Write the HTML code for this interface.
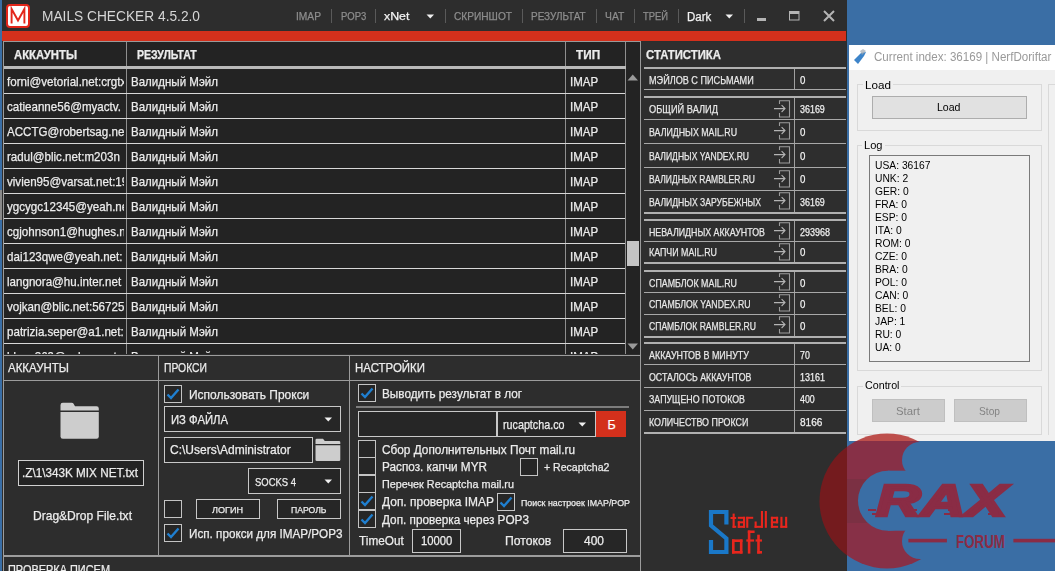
<!DOCTYPE html>
<html><head><meta charset="utf-8"><style>
html,body{margin:0;padding:0;}
body{width:1055px;height:571px;position:relative;overflow:hidden;background:#3a6ea5;font-family:"Liberation Sans",sans-serif;}
.a{position:absolute;}
.t{position:absolute;white-space:nowrap;transform-origin:0 0;-webkit-text-stroke:0.25px currentColor;}
</style></head><body>
<div class="a" style="left:2px;top:0px;width:845px;height:571px;background:#2d2d2d;"></div>
<div class="a" style="left:0px;top:0px;width:2px;height:190px;background:#3a6ea5;"></div>
<div class="a" style="left:0px;top:190px;width:2px;height:30px;background:#8a8a8a;"></div>
<div class="a" style="left:0px;top:453px;width:2px;height:118px;background:#3a6ea5;"></div>
<svg class="a" style="left:6px;top:4px" width="24" height="24" viewBox="0 0 24 24"><rect x="1" y="1" width="22" height="22" rx="3" fill="#ffffff" stroke="#e3261a" stroke-width="2"/><path d="M5.6 19.5 V5 L12 16.5 L18.4 5 V19.5" fill="none" stroke="#e3261a" stroke-width="1.9"/></svg>
<span class="t" id="t0" style="transform:scaleX(0.9281);left:41.6px;top:9.27px;font-size:14.8px;line-height:14.8px;color:#d6d6d6;font-weight:400;font-family:'Liberation Sans';-webkit-text-stroke:0">MAILS CHECKER 4.5.2.0</span>
<span class="t" id="t1" style="transform:scaleX(0.9738);left:296.3px;top:11.41px;font-size:10.5px;line-height:10.5px;color:#8d8d8d;font-weight:400;font-family:'Liberation Sans';">IMAP</span>
<span class="t" id="t2" style="transform:scaleX(0.9031);left:340.6px;top:11.41px;font-size:10.5px;line-height:10.5px;color:#8d8d8d;font-weight:400;font-family:'Liberation Sans';">POP3</span>
<span class="t" id="t3" style="transform:scaleX(1.1036);left:383.6px;top:11.42px;font-size:11.2px;line-height:11.2px;color:#f2f2f2;font-weight:400;font-family:'Liberation Sans';">xNet</span>
<span class="t" id="t4" style="transform:scaleX(0.9659);left:454.1px;top:11.41px;font-size:10.5px;line-height:10.5px;color:#8d8d8d;font-weight:400;font-family:'Liberation Sans';">СКРИНШОТ</span>
<span class="t" id="t5" style="transform:scaleX(0.9460);left:531.4px;top:11.41px;font-size:10.5px;line-height:10.5px;color:#8d8d8d;font-weight:400;font-family:'Liberation Sans';">РЕЗУЛЬТАТ</span>
<span class="t" id="t6" style="transform:scaleX(0.9842);left:605.0px;top:11.41px;font-size:10.5px;line-height:10.5px;color:#8d8d8d;font-weight:400;font-family:'Liberation Sans';">ЧАТ</span>
<span class="t" id="t7" style="transform:scaleX(0.8939);left:643.4px;top:11.41px;font-size:10.5px;line-height:10.5px;color:#8d8d8d;font-weight:400;font-family:'Liberation Sans';">ТРЕЙ</span>
<span class="t" id="t8" style="transform:scaleX(0.9549);left:686.6px;top:10.84px;font-size:12px;line-height:12px;color:#f2f2f2;font-weight:400;font-family:'Liberation Sans';">Dark</span>
<div class="a" style="left:331px;top:9px;width:1px;height:14px;background:#5a5a5a;"></div>
<div class="a" style="left:375px;top:9px;width:1px;height:14px;background:#5a5a5a;"></div>
<div class="a" style="left:445px;top:9px;width:1px;height:14px;background:#5a5a5a;"></div>
<div class="a" style="left:522px;top:9px;width:1px;height:14px;background:#5a5a5a;"></div>
<div class="a" style="left:596px;top:9px;width:1px;height:14px;background:#5a5a5a;"></div>
<div class="a" style="left:634px;top:9px;width:1px;height:14px;background:#5a5a5a;"></div>
<div class="a" style="left:678px;top:9px;width:1px;height:14px;background:#5a5a5a;"></div>
<div class="a" style="left:744px;top:9px;width:1px;height:14px;background:#5a5a5a;"></div>
<svg class="a" style="left:426px;top:14px" width="9" height="5"><path d="M0.5 0.5 H8 L4.25 4.5 Z" fill="#f0f0f0"/></svg>
<svg class="a" style="left:725px;top:14px" width="9" height="5"><path d="M0.5 0.5 H8 L4.25 4.5 Z" fill="#f0f0f0"/></svg>
<div class="a" style="left:757px;top:18px;width:9px;height:3px;background:#b4b4b4;"></div>
<svg class="a" style="left:789px;top:11px" width="11" height="10"><rect x="0.5" y="0.5" width="9.5" height="8.5" fill="none" stroke="#b4b4b4" stroke-width="1"/><rect x="0.5" y="0.5" width="9.5" height="2.5" fill="#b4b4b4"/></svg>
<svg class="a" style="left:823px;top:10px" width="12" height="12"><path d="M1 1 L11 11 M11 1 L1 11" stroke="#b4b4b4" stroke-width="2"/></svg>
<div class="a" style="left:2px;top:31px;width:844px;height:10px;background:#d3301c;"></div>
<div class="a" style="left:3px;top:41px;width:638px;height:313px;background:#232323;"></div>
<div class="a" style="left:3px;top:41px;width:638px;height:1px;background:#9a9a9a;"></div>
<div class="a" style="left:3px;top:41px;width:1px;height:530px;background:#9a9a9a;"></div>
<div class="a" style="left:126px;top:42px;width:1px;height:312px;background:#8e8e8e;"></div>
<div class="a" style="left:565px;top:42px;width:1px;height:312px;background:#8e8e8e;"></div>
<div class="a" style="left:625px;top:42px;width:1px;height:312px;background:#8e8e8e;"></div>
<div class="a" style="left:640px;top:41px;width:1px;height:530px;background:#9a9a9a;"></div>
<div class="a" style="left:4px;top:66px;width:622px;height:3px;background:#b9b9b9;"></div>
<span class="t" id="t9" style="transform:scaleX(0.9440);left:14.0px;top:48.84px;font-size:12px;line-height:12px;color:#ececec;font-weight:700;font-family:'Liberation Sans';">АККАУНТЫ</span>
<span class="t" id="t10" style="transform:scaleX(0.8794);left:137.3px;top:48.84px;font-size:12px;line-height:12px;color:#ececec;font-weight:700;font-family:'Liberation Sans';">РЕЗУЛЬТАТ</span>
<span class="t" id="t11" style="transform:scaleX(0.9799);left:576.2px;top:48.84px;font-size:12px;line-height:12px;color:#ececec;font-weight:700;font-family:'Liberation Sans';">ТИП</span>
<div class="a" style="left:4px;top:93px;width:621px;height:1px;background:#d8d8d8;"></div>
<div class="a" style="left:4px;top:118px;width:621px;height:1px;background:#d8d8d8;"></div>
<div class="a" style="left:4px;top:143px;width:621px;height:1px;background:#d8d8d8;"></div>
<div class="a" style="left:4px;top:168px;width:621px;height:1px;background:#d8d8d8;"></div>
<div class="a" style="left:4px;top:193px;width:621px;height:1px;background:#d8d8d8;"></div>
<div class="a" style="left:4px;top:218px;width:621px;height:1px;background:#d8d8d8;"></div>
<div class="a" style="left:4px;top:243px;width:621px;height:1px;background:#d8d8d8;"></div>
<div class="a" style="left:4px;top:268px;width:621px;height:1px;background:#d8d8d8;"></div>
<div class="a" style="left:4px;top:293px;width:621px;height:1px;background:#d8d8d8;"></div>
<div class="a" style="left:4px;top:318px;width:621px;height:1px;background:#d8d8d8;"></div>
<div class="a" style="left:4px;top:343px;width:621px;height:1px;background:#d8d8d8;"></div>
<div class="a" style="left:4px;top:69px;width:120px;height:285px;overflow:hidden">
<span class="t" style="left:3px;top:7.10px;font-size:12.4px;line-height:12.4px;color:#ececec;transform:scaleX(0.935)">forni@vetorial.net:crgtx</span>
<span class="t" style="left:3px;top:32.10px;font-size:12.4px;line-height:12.4px;color:#ececec;transform:scaleX(0.935)">catieanne56@myactv.</span>
<span class="t" style="left:3px;top:57.10px;font-size:12.4px;line-height:12.4px;color:#ececec;transform:scaleX(0.935)">ACCTG@robertsag.net:x</span>
<span class="t" style="left:3px;top:82.10px;font-size:12.4px;line-height:12.4px;color:#ececec;transform:scaleX(0.935)">radul@blic.net:m203n</span>
<span class="t" style="left:3px;top:107.10px;font-size:12.4px;line-height:12.4px;color:#ececec;transform:scaleX(0.935)">vivien95@varsat.net:19</span>
<span class="t" style="left:3px;top:132.10px;font-size:12.4px;line-height:12.4px;color:#ececec;transform:scaleX(0.935)">ygcygc12345@yeah.ne</span>
<span class="t" style="left:3px;top:157.10px;font-size:12.4px;line-height:12.4px;color:#ececec;transform:scaleX(0.935)">cgjohnson1@hughes.n</span>
<span class="t" style="left:3px;top:182.10px;font-size:12.4px;line-height:12.4px;color:#ececec;transform:scaleX(0.935)">dai123qwe@yeah.net:</span>
<span class="t" style="left:3px;top:207.10px;font-size:12.4px;line-height:12.4px;color:#ececec;transform:scaleX(0.935)">langnora@hu.inter.net</span>
<span class="t" style="left:3px;top:232.10px;font-size:12.4px;line-height:12.4px;color:#ececec;transform:scaleX(0.935)">vojkan@blic.net:56725</span>
<span class="t" style="left:3px;top:257.10px;font-size:12.4px;line-height:12.4px;color:#ececec;transform:scaleX(0.935)">patrizia.seper@a1.net:</span>
<span class="t" style="left:3px;top:282.10px;font-size:12.4px;line-height:12.4px;color:#ececec;transform:scaleX(0.935)">ldsop369@yahoo.net:</span>
</div>
<div class="a" style="left:127px;top:69px;width:498px;height:285px;overflow:hidden">
<span class="t" style="left:3.6px;top:7.10px;font-size:12.4px;line-height:12.4px;color:#ececec;transform:scaleX(0.93)">Валидный Мэйл</span>
<span class="t" style="left:442.5px;top:7.10px;font-size:12.4px;line-height:12.4px;color:#ececec;transform:scaleX(0.93)">IMAP</span>
<span class="t" style="left:3.6px;top:32.10px;font-size:12.4px;line-height:12.4px;color:#ececec;transform:scaleX(0.93)">Валидный Мэйл</span>
<span class="t" style="left:442.5px;top:32.10px;font-size:12.4px;line-height:12.4px;color:#ececec;transform:scaleX(0.93)">IMAP</span>
<span class="t" style="left:3.6px;top:57.10px;font-size:12.4px;line-height:12.4px;color:#ececec;transform:scaleX(0.93)">Валидный Мэйл</span>
<span class="t" style="left:442.5px;top:57.10px;font-size:12.4px;line-height:12.4px;color:#ececec;transform:scaleX(0.93)">IMAP</span>
<span class="t" style="left:3.6px;top:82.10px;font-size:12.4px;line-height:12.4px;color:#ececec;transform:scaleX(0.93)">Валидный Мэйл</span>
<span class="t" style="left:442.5px;top:82.10px;font-size:12.4px;line-height:12.4px;color:#ececec;transform:scaleX(0.93)">IMAP</span>
<span class="t" style="left:3.6px;top:107.10px;font-size:12.4px;line-height:12.4px;color:#ececec;transform:scaleX(0.93)">Валидный Мэйл</span>
<span class="t" style="left:442.5px;top:107.10px;font-size:12.4px;line-height:12.4px;color:#ececec;transform:scaleX(0.93)">IMAP</span>
<span class="t" style="left:3.6px;top:132.10px;font-size:12.4px;line-height:12.4px;color:#ececec;transform:scaleX(0.93)">Валидный Мэйл</span>
<span class="t" style="left:442.5px;top:132.10px;font-size:12.4px;line-height:12.4px;color:#ececec;transform:scaleX(0.93)">IMAP</span>
<span class="t" style="left:3.6px;top:157.10px;font-size:12.4px;line-height:12.4px;color:#ececec;transform:scaleX(0.93)">Валидный Мэйл</span>
<span class="t" style="left:442.5px;top:157.10px;font-size:12.4px;line-height:12.4px;color:#ececec;transform:scaleX(0.93)">IMAP</span>
<span class="t" style="left:3.6px;top:182.10px;font-size:12.4px;line-height:12.4px;color:#ececec;transform:scaleX(0.93)">Валидный Мэйл</span>
<span class="t" style="left:442.5px;top:182.10px;font-size:12.4px;line-height:12.4px;color:#ececec;transform:scaleX(0.93)">IMAP</span>
<span class="t" style="left:3.6px;top:207.10px;font-size:12.4px;line-height:12.4px;color:#ececec;transform:scaleX(0.93)">Валидный Мэйл</span>
<span class="t" style="left:442.5px;top:207.10px;font-size:12.4px;line-height:12.4px;color:#ececec;transform:scaleX(0.93)">IMAP</span>
<span class="t" style="left:3.6px;top:232.10px;font-size:12.4px;line-height:12.4px;color:#ececec;transform:scaleX(0.93)">Валидный Мэйл</span>
<span class="t" style="left:442.5px;top:232.10px;font-size:12.4px;line-height:12.4px;color:#ececec;transform:scaleX(0.93)">IMAP</span>
<span class="t" style="left:3.6px;top:257.10px;font-size:12.4px;line-height:12.4px;color:#ececec;transform:scaleX(0.93)">Валидный Мэйл</span>
<span class="t" style="left:442.5px;top:257.10px;font-size:12.4px;line-height:12.4px;color:#ececec;transform:scaleX(0.93)">IMAP</span>
<span class="t" style="left:3.6px;top:282.10px;font-size:12.4px;line-height:12.4px;color:#ececec;transform:scaleX(0.93)">Валидный Мэйл</span>
<span class="t" style="left:442.5px;top:282.10px;font-size:12.4px;line-height:12.4px;color:#ececec;transform:scaleX(0.93)">IMAP</span>
</div>
<svg class="a" style="left:627px;top:74px" width="12" height="7"><path d="M0.5 6.5 L5.75 0.5 L11 6.5 Z" fill="#9a9a9a"/></svg>
<div class="a" style="left:627px;top:241px;width:12px;height:25px;background:#c4c4c4;"></div>
<svg class="a" style="left:627px;top:343px" width="12" height="7"><path d="M0.5 0.5 L5.75 6.5 L11 0.5 Z" fill="#9a9a9a"/></svg>
<div class="a" style="left:641px;top:42px;width:205px;height:529px;background:#2e2e2e;"></div>
<div class="a" style="left:640px;top:41px;width:1px;height:530px;background:#9a9a9a;"></div>
<span class="t" id="t12" style="transform:scaleX(0.9081);left:645.6px;top:48.82px;font-size:12.5px;line-height:12.5px;color:#ececec;font-weight:700;font-family:'Liberation Sans';">СТАТИСТИКА</span>
<div class="a" style="left:644px;top:67px;width:202px;height:2px;background:#b0b0b0;"></div>
<span class="t" id="t13" style="transform:scaleX(0.8280);left:648.6px;top:74.99px;font-size:11px;line-height:11px;color:#e8e8e8;font-weight:400;font-family:'Liberation Sans';">МЭЙЛОВ С ПИСЬМАМИ</span>
<span class="t" id="t14" style="transform:scaleX(0.8816);left:799.8px;top:74.99px;font-size:11px;line-height:11px;color:#f0f0f0;font-weight:400;font-family:'Liberation Sans';">0</span>
<div class="a" style="left:794px;top:69px;width:1px;height:20px;background:#a0a0a0;"></div>
<span class="t" id="t15" style="transform:scaleX(0.8405);left:648.6px;top:104.29px;font-size:11px;line-height:11px;color:#e8e8e8;font-weight:400;font-family:'Liberation Sans';">ОБЩИЙ ВАЛИД</span>
<span class="t" id="t16" style="transform:scaleX(0.8106);left:799.8px;top:104.29px;font-size:11px;line-height:11px;color:#f0f0f0;font-weight:400;font-family:'Liberation Sans';">36169</span>
<div class="a" style="left:794px;top:98px;width:1px;height:21px;background:#a0a0a0;"></div>
<svg class="a" style="left:773px;top:100px" width="18" height="18" viewBox="0 0 18 18"><path d="M6.5 4 V0.8 H16.5 V17 H6.5 V13" fill="none" stroke="#9c9c9c" stroke-width="1.1"/><path d="M1 8.6 H12 M8.6 5.2 L12 8.6 L8.6 12" fill="none" stroke="#b4b4b4" stroke-width="1.1"/></svg>
<span class="t" id="t17" style="transform:scaleX(0.8013);left:648.6px;top:127.09px;font-size:11px;line-height:11px;color:#e8e8e8;font-weight:400;font-family:'Liberation Sans';">ВАЛИДНЫХ MAIL.RU</span>
<span class="t" id="t18" style="transform:scaleX(0.8816);left:799.8px;top:127.09px;font-size:11px;line-height:11px;color:#f0f0f0;font-weight:400;font-family:'Liberation Sans';">0</span>
<div class="a" style="left:794px;top:120px;width:1px;height:23px;background:#a0a0a0;"></div>
<svg class="a" style="left:773px;top:122px" width="18" height="18" viewBox="0 0 18 18"><path d="M6.5 4 V0.8 H16.5 V17 H6.5 V13" fill="none" stroke="#9c9c9c" stroke-width="1.1"/><path d="M1 8.6 H12 M8.6 5.2 L12 8.6 L8.6 12" fill="none" stroke="#b4b4b4" stroke-width="1.1"/></svg>
<span class="t" id="t19" style="transform:scaleX(0.7778);left:648.6px;top:150.69px;font-size:11px;line-height:11px;color:#e8e8e8;font-weight:400;font-family:'Liberation Sans';">ВАЛИДНЫХ YANDEX.RU</span>
<span class="t" id="t20" style="transform:scaleX(0.8816);left:799.8px;top:150.69px;font-size:11px;line-height:11px;color:#f0f0f0;font-weight:400;font-family:'Liberation Sans';">0</span>
<div class="a" style="left:794px;top:144px;width:1px;height:23px;background:#a0a0a0;"></div>
<svg class="a" style="left:773px;top:146px" width="18" height="18" viewBox="0 0 18 18"><path d="M6.5 4 V0.8 H16.5 V17 H6.5 V13" fill="none" stroke="#9c9c9c" stroke-width="1.1"/><path d="M1 8.6 H12 M8.6 5.2 L12 8.6 L8.6 12" fill="none" stroke="#b4b4b4" stroke-width="1.1"/></svg>
<span class="t" id="t21" style="transform:scaleX(0.7719);left:648.6px;top:174.49px;font-size:11px;line-height:11px;color:#e8e8e8;font-weight:400;font-family:'Liberation Sans';">ВАЛИДНЫХ RAMBLER.RU</span>
<span class="t" id="t22" style="transform:scaleX(0.8816);left:799.8px;top:174.49px;font-size:11px;line-height:11px;color:#f0f0f0;font-weight:400;font-family:'Liberation Sans';">0</span>
<div class="a" style="left:794px;top:168px;width:1px;height:22px;background:#a0a0a0;"></div>
<svg class="a" style="left:773px;top:170px" width="18" height="18" viewBox="0 0 18 18"><path d="M6.5 4 V0.8 H16.5 V17 H6.5 V13" fill="none" stroke="#9c9c9c" stroke-width="1.1"/><path d="M1 8.6 H12 M8.6 5.2 L12 8.6 L8.6 12" fill="none" stroke="#b4b4b4" stroke-width="1.1"/></svg>
<span class="t" id="t23" style="transform:scaleX(0.7832);left:648.6px;top:197.49px;font-size:11px;line-height:11px;color:#e8e8e8;font-weight:400;font-family:'Liberation Sans';">ВАЛИДНЫХ ЗАРУБЕЖНЫХ</span>
<span class="t" id="t24" style="transform:scaleX(0.8106);left:799.8px;top:197.49px;font-size:11px;line-height:11px;color:#f0f0f0;font-weight:400;font-family:'Liberation Sans';">36169</span>
<div class="a" style="left:794px;top:191px;width:1px;height:21px;background:#a0a0a0;"></div>
<svg class="a" style="left:773px;top:192px" width="18" height="18" viewBox="0 0 18 18"><path d="M6.5 4 V0.8 H16.5 V17 H6.5 V13" fill="none" stroke="#9c9c9c" stroke-width="1.1"/><path d="M1 8.6 H12 M8.6 5.2 L12 8.6 L8.6 12" fill="none" stroke="#b4b4b4" stroke-width="1.1"/></svg>
<span class="t" id="t25" style="transform:scaleX(0.8025);left:648.6px;top:226.99px;font-size:11px;line-height:11px;color:#e8e8e8;font-weight:400;font-family:'Liberation Sans';">НЕВАЛИДНЫХ АККАУНТОВ</span>
<span class="t" id="t26" style="transform:scaleX(0.8170);left:799.8px;top:226.99px;font-size:11px;line-height:11px;color:#f0f0f0;font-weight:400;font-family:'Liberation Sans';">293968</span>
<div class="a" style="left:794px;top:221px;width:1px;height:20px;background:#a0a0a0;"></div>
<svg class="a" style="left:773px;top:222px" width="18" height="18" viewBox="0 0 18 18"><path d="M6.5 4 V0.8 H16.5 V17 H6.5 V13" fill="none" stroke="#9c9c9c" stroke-width="1.1"/><path d="M1 8.6 H12 M8.6 5.2 L12 8.6 L8.6 12" fill="none" stroke="#b4b4b4" stroke-width="1.1"/></svg>
<span class="t" id="t27" style="transform:scaleX(0.8052);left:648.6px;top:247.09px;font-size:11px;line-height:11px;color:#e8e8e8;font-weight:400;font-family:'Liberation Sans';">КАПЧИ MAIL.RU</span>
<span class="t" id="t28" style="transform:scaleX(0.8816);left:799.8px;top:247.09px;font-size:11px;line-height:11px;color:#f0f0f0;font-weight:400;font-family:'Liberation Sans';">0</span>
<div class="a" style="left:794px;top:242px;width:1px;height:20px;background:#a0a0a0;"></div>
<svg class="a" style="left:773px;top:243px" width="18" height="18" viewBox="0 0 18 18"><path d="M6.5 4 V0.8 H16.5 V17 H6.5 V13" fill="none" stroke="#9c9c9c" stroke-width="1.1"/><path d="M1 8.6 H12 M8.6 5.2 L12 8.6 L8.6 12" fill="none" stroke="#b4b4b4" stroke-width="1.1"/></svg>
<span class="t" id="t29" style="transform:scaleX(0.8041);left:648.6px;top:278.09px;font-size:11px;line-height:11px;color:#e8e8e8;font-weight:400;font-family:'Liberation Sans';">СПАМБЛОК MAIL.RU</span>
<span class="t" id="t30" style="transform:scaleX(0.8816);left:799.8px;top:278.09px;font-size:11px;line-height:11px;color:#f0f0f0;font-weight:400;font-family:'Liberation Sans';">0</span>
<div class="a" style="left:794px;top:272px;width:1px;height:20px;background:#a0a0a0;"></div>
<svg class="a" style="left:773px;top:273px" width="18" height="18" viewBox="0 0 18 18"><path d="M6.5 4 V0.8 H16.5 V17 H6.5 V13" fill="none" stroke="#9c9c9c" stroke-width="1.1"/><path d="M1 8.6 H12 M8.6 5.2 L12 8.6 L8.6 12" fill="none" stroke="#b4b4b4" stroke-width="1.1"/></svg>
<span class="t" id="t31" style="transform:scaleX(0.7927);left:648.6px;top:299.19px;font-size:11px;line-height:11px;color:#e8e8e8;font-weight:400;font-family:'Liberation Sans';">СПАМБЛОК YANDEX.RU</span>
<span class="t" id="t32" style="transform:scaleX(0.8816);left:799.8px;top:299.19px;font-size:11px;line-height:11px;color:#f0f0f0;font-weight:400;font-family:'Liberation Sans';">0</span>
<div class="a" style="left:794px;top:293px;width:1px;height:21px;background:#a0a0a0;"></div>
<svg class="a" style="left:773px;top:294px" width="18" height="18" viewBox="0 0 18 18"><path d="M6.5 4 V0.8 H16.5 V17 H6.5 V13" fill="none" stroke="#9c9c9c" stroke-width="1.1"/><path d="M1 8.6 H12 M8.6 5.2 L12 8.6 L8.6 12" fill="none" stroke="#b4b4b4" stroke-width="1.1"/></svg>
<span class="t" id="t33" style="transform:scaleX(0.7814);left:648.6px;top:321.29px;font-size:11px;line-height:11px;color:#e8e8e8;font-weight:400;font-family:'Liberation Sans';">СПАМБЛОК RAMBLER.RU</span>
<span class="t" id="t34" style="transform:scaleX(0.8816);left:799.8px;top:321.29px;font-size:11px;line-height:11px;color:#f0f0f0;font-weight:400;font-family:'Liberation Sans';">0</span>
<div class="a" style="left:794px;top:315px;width:1px;height:21px;background:#a0a0a0;"></div>
<svg class="a" style="left:773px;top:316px" width="18" height="18" viewBox="0 0 18 18"><path d="M6.5 4 V0.8 H16.5 V17 H6.5 V13" fill="none" stroke="#9c9c9c" stroke-width="1.1"/><path d="M1 8.6 H12 M8.6 5.2 L12 8.6 L8.6 12" fill="none" stroke="#b4b4b4" stroke-width="1.1"/></svg>
<span class="t" id="t35" style="transform:scaleX(0.8116);left:648.6px;top:349.69px;font-size:11px;line-height:11px;color:#e8e8e8;font-weight:400;font-family:'Liberation Sans';">АККАУНТОВ В МИНУТУ</span>
<span class="t" id="t36" style="transform:scaleX(0.8000);left:799.8px;top:349.69px;font-size:11px;line-height:11px;color:#f0f0f0;font-weight:400;font-family:'Liberation Sans';">70</span>
<div class="a" style="left:794px;top:344px;width:1px;height:20px;background:#a0a0a0;"></div>
<span class="t" id="t37" style="transform:scaleX(0.8000);left:648.6px;top:371.79px;font-size:11px;line-height:11px;color:#e8e8e8;font-weight:400;font-family:'Liberation Sans';">ОСТАЛОСЬ АККАУНТОВ</span>
<span class="t" id="t38" style="transform:scaleX(0.8172);left:799.8px;top:371.79px;font-size:11px;line-height:11px;color:#f0f0f0;font-weight:400;font-family:'Liberation Sans';">13161</span>
<div class="a" style="left:794px;top:365px;width:1px;height:22px;background:#a0a0a0;"></div>
<span class="t" id="t39" style="transform:scaleX(0.8041);left:648.6px;top:394.19px;font-size:11px;line-height:11px;color:#e8e8e8;font-weight:400;font-family:'Liberation Sans';">ЗАПУЩЕНО ПОТОКОВ</span>
<span class="t" id="t40" style="transform:scaleX(0.8007);left:799.8px;top:394.19px;font-size:11px;line-height:11px;color:#f0f0f0;font-weight:400;font-family:'Liberation Sans';">400</span>
<div class="a" style="left:794px;top:388px;width:1px;height:22px;background:#a0a0a0;"></div>
<span class="t" id="t41" style="transform:scaleX(0.8075);left:648.6px;top:417.49px;font-size:11px;line-height:11px;color:#e8e8e8;font-weight:400;font-family:'Liberation Sans';">КОЛИЧЕСТВО ПРОКСИ</span>
<span class="t" id="t42" style="transform:scaleX(0.9149);left:799.8px;top:417.49px;font-size:11px;line-height:11px;color:#f0f0f0;font-weight:400;font-family:'Liberation Sans';">8166</span>
<div class="a" style="left:794px;top:411px;width:1px;height:21px;background:#a0a0a0;"></div>
<div class="a" style="left:644px;top:89px;width:202px;height:1px;background:#a8a8a8;"></div>
<div class="a" style="left:644px;top:119px;width:202px;height:1px;background:#a8a8a8;"></div>
<div class="a" style="left:644px;top:143px;width:202px;height:1px;background:#a8a8a8;"></div>
<div class="a" style="left:644px;top:167px;width:202px;height:1px;background:#a8a8a8;"></div>
<div class="a" style="left:644px;top:190px;width:202px;height:1px;background:#a8a8a8;"></div>
<div class="a" style="left:644px;top:241px;width:202px;height:1px;background:#a8a8a8;"></div>
<div class="a" style="left:644px;top:292px;width:202px;height:1px;background:#a8a8a8;"></div>
<div class="a" style="left:644px;top:314px;width:202px;height:1px;background:#a8a8a8;"></div>
<div class="a" style="left:644px;top:364px;width:202px;height:1px;background:#a8a8a8;"></div>
<div class="a" style="left:644px;top:387px;width:202px;height:1px;background:#a8a8a8;"></div>
<div class="a" style="left:644px;top:410px;width:202px;height:1px;background:#a8a8a8;"></div>
<div class="a" style="left:644px;top:96px;width:202px;height:2px;background:#b0b0b0;"></div>
<div class="a" style="left:644px;top:212px;width:202px;height:2px;background:#b0b0b0;"></div>
<div class="a" style="left:644px;top:219px;width:202px;height:2px;background:#b0b0b0;"></div>
<div class="a" style="left:644px;top:262px;width:202px;height:2px;background:#b0b0b0;"></div>
<div class="a" style="left:644px;top:270px;width:202px;height:2px;background:#b0b0b0;"></div>
<div class="a" style="left:644px;top:336px;width:202px;height:2px;background:#b0b0b0;"></div>
<div class="a" style="left:644px;top:342px;width:202px;height:2px;background:#b0b0b0;"></div>
<div class="a" style="left:644px;top:432px;width:202px;height:2px;background:#b0b0b0;"></div>
<div class="a" style="left:3px;top:355px;width:638px;height:216px;background:#2d2d2d;"></div>
<div class="a" style="left:3px;top:355px;width:638px;height:1px;background:#9c9c9c;"></div>
<div class="a" style="left:3px;top:355px;width:1px;height:216px;background:#9c9c9c;"></div>
<div class="a" style="left:640px;top:355px;width:1px;height:216px;background:#9c9c9c;"></div>
<div class="a" style="left:4px;top:380px;width:636px;height:1px;background:#9c9c9c;"></div>
<div class="a" style="left:158px;top:356px;width:1px;height:199px;background:#9c9c9c;"></div>
<div class="a" style="left:349px;top:356px;width:1px;height:199px;background:#9c9c9c;"></div>
<div class="a" style="left:4px;top:555px;width:636px;height:2px;background:#9c9c9c;"></div>
<span class="t" id="t43" style="transform:scaleX(0.9192);left:8.0px;top:362.42px;font-size:12.5px;line-height:12.5px;color:#ececec;font-weight:400;font-family:'Liberation Sans';">АККАУНТЫ</span>
<span class="t" id="t44" style="transform:scaleX(0.8279);left:163.5px;top:362.42px;font-size:12.5px;line-height:12.5px;color:#ececec;font-weight:400;font-family:'Liberation Sans';">ПРОКСИ</span>
<span class="t" id="t45" style="transform:scaleX(0.9165);left:354.6px;top:362.22px;font-size:12.5px;line-height:12.5px;color:#ececec;font-weight:400;font-family:'Liberation Sans';">НАСТРОЙКИ</span>
<span class="t" id="t46" style="transform:scaleX(0.8746);left:8.0px;top:563.92px;font-size:12.5px;line-height:12.5px;color:#ececec;font-weight:400;font-family:'Liberation Sans';">ПРОВЕРКА ПИСЕМ</span>
<svg class="a" style="left:60px;top:402px" width="40" height="38" viewBox="0 0 40 38"><path d="M0.5 8.5 V3 Q0.5 0.7 2.8 0.7 H11.8 Q12.8 0.7 13.4 1.5 L15 4.2 H36.5 Q38.8 4.2 38.8 6.5 V8.5 Z" fill="#cdcdcd"/><path d="M0.5 10 H38.8 V34.5 Q38.8 36.8 36.5 36.8 H2.8 Q0.5 36.8 0.5 34.5 Z" fill="#cdcdcd"/></svg>
<div class="a" style="left:18px;top:460px;width:124px;height:24px;border:1px solid #d0d0d0;background:#232323;"></div>
<span class="t" id="t47" style="transform:scaleX(0.9463);left:22.0px;top:466.50px;font-size:12.4px;line-height:12.4px;color:#ececec;font-weight:400;font-family:'Liberation Sans';">.Z\1\343K MIX NET.txt</span>
<span class="t" id="t48" style="transform:scaleX(0.9713);left:32.7px;top:509.50px;font-size:12.4px;line-height:12.4px;color:#ececec;font-weight:400;font-family:'Liberation Sans';">Drag&amp;Drop File.txt</span>
<div class="a" style="left:164px;top:385px;width:16px;height:16px;border:1px solid #c4c4c4;background:#262626;"></div>
<svg class="a" style="left:164px;top:385px" width="18" height="18" viewBox="0 0 18 18"><path d="M3.5 9.5 L7 13 L14.5 4.5" fill="none" stroke="#1f7fd0" stroke-width="2.4" stroke-linejoin="miter"/></svg>
<span class="t" id="t49" style="transform:scaleX(0.9574);left:188.7px;top:388.92px;font-size:12.5px;line-height:12.5px;color:#ececec;font-weight:400;font-family:'Liberation Sans';">Использовать Прокси</span>
<div class="a" style="left:164px;top:406px;width:175px;height:24px;border:1px solid #c8c8c8;background:#262626;"></div>
<span class="t" id="t50" style="transform:scaleX(0.9032);left:171.1px;top:413.62px;font-size:12.5px;line-height:12.5px;color:#ececec;font-weight:400;font-family:'Liberation Sans';">ИЗ ФАЙЛА</span>
<svg class="a" style="left:324px;top:417px" width="9" height="5"><path d="M0.5 0.5 H8 L4.25 4.5 Z" fill="#f0f0f0"/></svg>
<div class="a" style="left:164px;top:437px;width:147px;height:24px;border:1px solid #c8c8c8;background:#262626;"></div>
<span class="t" id="t51" style="transform:scaleX(0.9847);left:169.8px;top:443.67px;font-size:12.2px;line-height:12.2px;color:#ececec;font-weight:400;font-family:'Liberation Sans';">C:\Users\Administrator</span>
<svg class="a" style="left:315px;top:438px" width="26" height="24" viewBox="0 0 26 24"><path d="M0.5 6 V2 Q0.5 0.7 1.8 0.7 H8 L9.8 3 H24 Q25.3 3 25.3 4.3 V6 Z" fill="#cdcdcd"/><path d="M0.5 7.2 H25.3 V21.8 Q25.3 23 24 23 H1.8 Q0.5 23 0.5 21.8 Z" fill="#cdcdcd"/></svg>
<div class="a" style="left:248px;top:468px;width:91px;height:24px;border:1px solid #c8c8c8;background:#262626;"></div>
<span class="t" id="t52" style="transform:scaleX(0.8598);left:254.8px;top:476.69px;font-size:11px;line-height:11px;color:#ececec;font-weight:400;font-family:'Liberation Sans';">SOCKS 4</span>
<svg class="a" style="left:324px;top:479px" width="9" height="5"><path d="M0.5 0.5 H8 L4.25 4.5 Z" fill="#f0f0f0"/></svg>
<div class="a" style="left:164px;top:500px;width:16px;height:16px;border:1px solid #c4c4c4;background:#262626;"></div>
<div class="a" style="left:196px;top:499px;width:62px;height:18px;border:1px solid #c8c8c8;background:#262626;"></div>
<span class="t" id="t53" style="transform:scaleX(0.9258);left:211.5px;top:504.80px;font-size:9.8px;line-height:9.8px;color:#ececec;font-weight:400;font-family:'Liberation Sans';">ЛОГИН</span>
<div class="a" style="left:277px;top:499px;width:62px;height:18px;border:1px solid #c8c8c8;background:#262626;"></div>
<span class="t" id="t54" style="transform:scaleX(0.8816);left:291.3px;top:504.80px;font-size:9.8px;line-height:9.8px;color:#ececec;font-weight:400;font-family:'Liberation Sans';">ПАРОЛЬ</span>
<div class="a" style="left:164px;top:524px;width:16px;height:16px;border:1px solid #c4c4c4;background:#262626;"></div>
<svg class="a" style="left:164px;top:524px" width="18" height="18" viewBox="0 0 18 18"><path d="M3.5 9.5 L7 13 L14.5 4.5" fill="none" stroke="#1f7fd0" stroke-width="2.4" stroke-linejoin="miter"/></svg>
<span class="t" id="t55" style="transform:scaleX(0.9351);left:188.7px;top:527.62px;font-size:12.5px;line-height:12.5px;color:#ececec;font-weight:400;font-family:'Liberation Sans';">Исп. прокси для IMAP/POP3</span>
<div class="a" style="left:358px;top:384px;width:16px;height:16px;border:1px solid #c4c4c4;background:#262626;"></div>
<svg class="a" style="left:358px;top:384px" width="18" height="18" viewBox="0 0 18 18"><path d="M3.5 9.5 L7 13 L14.5 4.5" fill="none" stroke="#1f7fd0" stroke-width="2.4" stroke-linejoin="miter"/></svg>
<span class="t" id="t56" style="transform:scaleX(0.9394);left:381.8px;top:387.62px;font-size:12.5px;line-height:12.5px;color:#ececec;font-weight:400;font-family:'Liberation Sans';">Выводить результат в лог</span>
<div class="a" style="left:356px;top:406px;width:273px;height:2px;background:#7c7c7c;"></div>
<div class="a" style="left:358px;top:411px;width:137px;height:24px;border:1px solid #c8c8c8;background:#262626;"></div>
<div class="a" style="left:497px;top:411px;width:97px;height:24px;border:1px solid #c8c8c8;background:#262626;"></div>
<span class="t" id="t57" style="transform:scaleX(0.8813);left:503.4px;top:418.87px;font-size:12.2px;line-height:12.2px;color:#ececec;font-weight:400;font-family:'Liberation Sans';">rucaptcha.co</span>
<svg class="a" style="left:578px;top:422px" width="9" height="5"><path d="M0.5 0.5 H8 L4.25 4.5 Z" fill="#f0f0f0"/></svg>
<div class="a" style="left:596px;top:411px;width:30px;height:26px;background:#d3301c;"></div>
<span class="t" id="t58" style="left:607.5px;top:419.02px;font-size:12.5px;line-height:12.5px;color:#ffffff;font-weight:400;font-family:'Liberation Sans';">Б</span>
<div class="a" style="left:358px;top:440px;width:16px;height:16px;border:1px solid #c4c4c4;background:#262626;"></div>
<span class="t" id="t59" style="transform:scaleX(0.9453);left:381.7px;top:443.72px;font-size:12.5px;line-height:12.5px;color:#ececec;font-weight:400;font-family:'Liberation Sans';">Сбор Дополнительных Почт mail.ru</span>
<div class="a" style="left:358px;top:457px;width:16px;height:16px;border:1px solid #c4c4c4;background:#262626;"></div>
<span class="t" id="t60" style="transform:scaleX(0.9409);left:381.7px;top:460.52px;font-size:12.5px;line-height:12.5px;color:#ececec;font-weight:400;font-family:'Liberation Sans';">Распоз. капчи MYR</span>
<div class="a" style="left:358px;top:475px;width:16px;height:16px;border:1px solid #c4c4c4;background:#262626;"></div>
<span class="t" id="t61" style="transform:scaleX(0.9666);left:381.7px;top:479.12px;font-size:11.2px;line-height:11.2px;color:#ececec;font-weight:400;font-family:'Liberation Sans';">Перечек Recaptcha mail.ru</span>
<div class="a" style="left:358px;top:492px;width:16px;height:16px;border:1px solid #c4c4c4;background:#262626;"></div>
<svg class="a" style="left:358px;top:492px" width="18" height="18" viewBox="0 0 18 18"><path d="M3.5 9.5 L7 13 L14.5 4.5" fill="none" stroke="#1f7fd0" stroke-width="2.4" stroke-linejoin="miter"/></svg>
<span class="t" id="t62" style="transform:scaleX(0.9566);left:381.7px;top:495.62px;font-size:12.5px;line-height:12.5px;color:#ececec;font-weight:400;font-family:'Liberation Sans';">Доп. проверка IMAP</span>
<div class="a" style="left:358px;top:510px;width:16px;height:16px;border:1px solid #c4c4c4;background:#262626;"></div>
<svg class="a" style="left:358px;top:510px" width="18" height="18" viewBox="0 0 18 18"><path d="M3.5 9.5 L7 13 L14.5 4.5" fill="none" stroke="#1f7fd0" stroke-width="2.4" stroke-linejoin="miter"/></svg>
<span class="t" id="t63" style="transform:scaleX(0.9413);left:381.7px;top:513.72px;font-size:12.5px;line-height:12.5px;color:#ececec;font-weight:400;font-family:'Liberation Sans';">Доп. проверка через POP3</span>
<div class="a" style="left:520px;top:458px;width:16px;height:16px;border:1px solid #c4c4c4;background:#262626;"></div>
<span class="t" id="t64" style="transform:scaleX(0.9173);left:544.4px;top:461.97px;font-size:11.5px;line-height:11.5px;color:#ececec;font-weight:400;font-family:'Liberation Sans';">+ Recaptcha2</span>
<div class="a" style="left:497px;top:493px;width:16px;height:16px;border:1px solid #c4c4c4;background:#262626;"></div>
<svg class="a" style="left:497px;top:493px" width="18" height="18" viewBox="0 0 18 18"><path d="M3.5 9.5 L7 13 L14.5 4.5" fill="none" stroke="#1f7fd0" stroke-width="2.4" stroke-linejoin="miter"/></svg>
<span class="t" id="t65" style="transform:scaleX(0.9212);left:520.7px;top:497.67px;font-size:9.6px;line-height:9.6px;color:#ececec;font-weight:400;font-family:'Liberation Sans';">Поиск настроек IMAP/POP</span>
<span class="t" id="t66" style="transform:scaleX(0.9438);left:358.8px;top:535.02px;font-size:12.5px;line-height:12.5px;color:#ececec;font-weight:400;font-family:'Liberation Sans';">TimeOut</span>
<div class="a" style="left:412px;top:529px;width:47px;height:22px;border:1px solid #c8c8c8;background:#262626;"></div>
<span class="t" id="t67" style="transform:scaleX(0.9236);left:420.5px;top:535.27px;font-size:12.2px;line-height:12.2px;color:#ececec;font-weight:400;font-family:'Liberation Sans';">10000</span>
<span class="t" id="t68" style="transform:scaleX(0.9767);left:504.7px;top:535.12px;font-size:12.5px;line-height:12.5px;color:#ececec;font-weight:400;font-family:'Liberation Sans';">Потоков</span>
<div class="a" style="left:563px;top:529px;width:62px;height:22px;border:1px solid #c8c8c8;background:#262626;"></div>
<span class="t" id="t69" style="transform:scaleX(0.9782);left:584.4px;top:535.37px;font-size:12.2px;line-height:12.2px;color:#ececec;font-weight:400;font-family:'Liberation Sans';">400</span>
<div class="a" style="left:849px;top:45px;width:206px;height:396px;background:#f0f0f0;"></div>
<div class="a" style="left:849px;top:45px;width:206px;height:25px;background:#ffffff;"></div>
<svg class="a" style="left:852px;top:48px" width="16" height="18" viewBox="0 0 16 18"><path d="M2 12 L9 5 L14 4 L12 8 L6 16 Z" fill="#1b6fc0" opacity="0.85"/><path d="M8 3 L11 1 L14 3 L10 7 Z" fill="#a0a8b0" opacity="0.7"/></svg>
<span class="t" id="t70" style="transform:scaleX(0.9648);left:873.9px;top:50.54px;font-size:12px;line-height:12px;color:#9a9a9a;font-weight:400;font-family:'Liberation Sans';-webkit-text-stroke:0">Current index: 36169 | NerfDoriftar</span>
<div class="a" style="left:857px;top:84px;width:183px;height:45px;border:1px solid #d9d9d9;background:transparent;"></div>
<div class="a" style="left:862.5px;top:83px;width:30px;height:3px;background:#f0f0f0;"></div>
<span class="t" id="t71" style="transform:scaleX(1.0159);left:864.5px;top:80.27px;font-size:11.5px;line-height:11.5px;color:#000000;font-weight:400;font-family:'Liberation Sans';-webkit-text-stroke:0">Load</span>
<div class="a" style="left:872px;top:96px;width:153px;height:21px;border:1px solid #adadad;background:#e1e1e1;"></div>
<span class="t" id="t72" style="transform:scaleX(0.9182);left:937.4px;top:102.27px;font-size:11.5px;line-height:11.5px;color:#000000;font-weight:400;font-family:'Liberation Sans';-webkit-text-stroke:0">Load</span>
<div class="a" style="left:857px;top:145px;width:183px;height:224px;border:1px solid #d9d9d9;background:transparent;"></div>
<div class="a" style="left:862.3px;top:144px;width:22.5px;height:3px;background:#f0f0f0;"></div>
<span class="t" id="t73" style="transform:scaleX(0.9642);left:864.3px;top:139.67px;font-size:11.5px;line-height:11.5px;color:#000000;font-weight:400;font-family:'Liberation Sans';-webkit-text-stroke:0">Log</span>
<div class="a" style="left:869px;top:155px;width:159px;height:205px;border:1px solid #7a7a7a;background:#f0f0f0;"></div>
<span class="t" id="t74" style="left:874.6px;top:159.52px;font-size:11.2px;line-height:11.2px;color:#000000;font-weight:400;font-family:'Liberation Sans';-webkit-text-stroke:0;transform:scaleX(0.92)">USA: 36167</span>
<span class="t" id="t75" style="left:874.6px;top:172.52px;font-size:11.2px;line-height:11.2px;color:#000000;font-weight:400;font-family:'Liberation Sans';-webkit-text-stroke:0;transform:scaleX(0.92)">UNK: 2</span>
<span class="t" id="t76" style="left:874.6px;top:185.52px;font-size:11.2px;line-height:11.2px;color:#000000;font-weight:400;font-family:'Liberation Sans';-webkit-text-stroke:0;transform:scaleX(0.92)">GER: 0</span>
<span class="t" id="t77" style="left:874.6px;top:198.52px;font-size:11.2px;line-height:11.2px;color:#000000;font-weight:400;font-family:'Liberation Sans';-webkit-text-stroke:0;transform:scaleX(0.92)">FRA: 0</span>
<span class="t" id="t78" style="left:874.6px;top:211.52px;font-size:11.2px;line-height:11.2px;color:#000000;font-weight:400;font-family:'Liberation Sans';-webkit-text-stroke:0;transform:scaleX(0.92)">ESP: 0</span>
<span class="t" id="t79" style="left:874.6px;top:224.52px;font-size:11.2px;line-height:11.2px;color:#000000;font-weight:400;font-family:'Liberation Sans';-webkit-text-stroke:0;transform:scaleX(0.92)">ITA: 0</span>
<span class="t" id="t80" style="left:874.6px;top:237.52px;font-size:11.2px;line-height:11.2px;color:#000000;font-weight:400;font-family:'Liberation Sans';-webkit-text-stroke:0;transform:scaleX(0.92)">ROM: 0</span>
<span class="t" id="t81" style="left:874.6px;top:250.52px;font-size:11.2px;line-height:11.2px;color:#000000;font-weight:400;font-family:'Liberation Sans';-webkit-text-stroke:0;transform:scaleX(0.92)">CZE: 0</span>
<span class="t" id="t82" style="left:874.6px;top:263.52px;font-size:11.2px;line-height:11.2px;color:#000000;font-weight:400;font-family:'Liberation Sans';-webkit-text-stroke:0;transform:scaleX(0.92)">BRA: 0</span>
<span class="t" id="t83" style="left:874.6px;top:276.52px;font-size:11.2px;line-height:11.2px;color:#000000;font-weight:400;font-family:'Liberation Sans';-webkit-text-stroke:0;transform:scaleX(0.92)">POL: 0</span>
<span class="t" id="t84" style="left:874.6px;top:289.52px;font-size:11.2px;line-height:11.2px;color:#000000;font-weight:400;font-family:'Liberation Sans';-webkit-text-stroke:0;transform:scaleX(0.92)">CAN: 0</span>
<span class="t" id="t85" style="left:874.6px;top:302.52px;font-size:11.2px;line-height:11.2px;color:#000000;font-weight:400;font-family:'Liberation Sans';-webkit-text-stroke:0;transform:scaleX(0.92)">BEL: 0</span>
<span class="t" id="t86" style="left:874.6px;top:315.52px;font-size:11.2px;line-height:11.2px;color:#000000;font-weight:400;font-family:'Liberation Sans';-webkit-text-stroke:0;transform:scaleX(0.92)">JAP: 1</span>
<span class="t" id="t87" style="left:874.6px;top:328.52px;font-size:11.2px;line-height:11.2px;color:#000000;font-weight:400;font-family:'Liberation Sans';-webkit-text-stroke:0;transform:scaleX(0.92)">RU: 0</span>
<span class="t" id="t88" style="left:874.6px;top:341.52px;font-size:11.2px;line-height:11.2px;color:#000000;font-weight:400;font-family:'Liberation Sans';-webkit-text-stroke:0;transform:scaleX(0.92)">UA: 0</span>
<div class="a" style="left:857px;top:386px;width:183px;height:47px;border:1px solid #d9d9d9;background:transparent;"></div>
<div class="a" style="left:862.7px;top:385px;width:38.5px;height:3px;background:#f0f0f0;"></div>
<span class="t" id="t89" style="transform:scaleX(0.9305);left:864.7px;top:380.47px;font-size:11.5px;line-height:11.5px;color:#000000;font-weight:400;font-family:'Liberation Sans';-webkit-text-stroke:0">Control</span>
<div class="a" style="left:872px;top:399px;width:71px;height:21px;border:1px solid #bfbfbf;background:#cccccc;"></div>
<span class="t" id="t90" style="transform:scaleX(0.9878);left:896.0px;top:405.77px;font-size:11.5px;line-height:11.5px;color:#838383;font-weight:400;font-family:'Liberation Sans';-webkit-text-stroke:0">Start</span>
<div class="a" style="left:954px;top:399px;width:71px;height:21px;border:1px solid #bfbfbf;background:#cccccc;"></div>
<span class="t" id="t91" style="transform:scaleX(0.8871);left:979.0px;top:405.77px;font-size:11.5px;line-height:11.5px;color:#838383;font-weight:400;font-family:'Liberation Sans';-webkit-text-stroke:0">Stop</span>
<div class="a" style="left:1048px;top:84px;width:1px;height:351px;background:#d9d9d9;"></div>
<div class="a" style="left:1048px;top:84px;width:7px;height:1px;background:#d9d9d9;"></div>
<svg class="a" style="left:700px;top:500px" width="90" height="60" viewBox="0 0 90 60"><path d="M726.4 524.5 V512 H711 V525.5 L726.4 538.5 V552 H711 V540" fill="none" stroke="#1a78c8" stroke-width="4.2" transform="translate(-700,-500)"/><rect x="32.6" y="13.6" width="2.1" height="14.2" fill="#e8261d"/><rect x="30.5" y="17" width="5.7" height="2" fill="#e8261d"/><rect x="32.6" y="25.8" width="3.6" height="2" fill="#e8261d"/><rect x="37.8" y="16.8" width="7.2" height="2" fill="#e8261d"/><rect x="43" y="16.8" width="2.1" height="11" fill="#e8261d"/><rect x="37.8" y="21.3" width="7.2" height="2" fill="#e8261d"/><rect x="37.8" y="21.3" width="2.1" height="6.5" fill="#e8261d"/><rect x="37.8" y="25.8" width="7.2" height="2" fill="#e8261d"/><rect x="46.2" y="16.8" width="2.1" height="11" fill="#e8261d"/><rect x="46.2" y="16.8" width="7" height="2" fill="#e8261d"/><rect x="60.9" y="11" width="2.1" height="16.8" fill="#e8261d"/><rect x="54.6" y="25.8" width="8.4" height="2" fill="#e8261d"/><rect x="54.6" y="21.5" width="2.1" height="6.3" fill="#e8261d"/><rect x="64.8" y="11" width="2.1" height="16.8" fill="#e8261d"/><rect x="70.9" y="16.8" width="7.2" height="2" fill="#e8261d"/><rect x="70.9" y="16.8" width="2.1" height="11" fill="#e8261d"/><rect x="76" y="16.8" width="2.1" height="6.5" fill="#e8261d"/><rect x="70.9" y="21.3" width="7.2" height="2" fill="#e8261d"/><rect x="70.9" y="25.8" width="7.2" height="2" fill="#e8261d"/><rect x="80.4" y="16.8" width="2.1" height="11" fill="#e8261d"/><rect x="85.1" y="16.8" width="2.1" height="11" fill="#e8261d"/><rect x="80.4" y="25.8" width="6.8" height="2" fill="#e8261d"/><rect x="32" y="39.4" width="10.5" height="2.6" fill="#e8261d"/><rect x="32" y="39.4" width="2.6" height="14.2" fill="#e8261d"/><rect x="39.9" y="39.4" width="2.6" height="14.2" fill="#e8261d"/><rect x="32" y="51" width="10.5" height="2.6" fill="#e8261d"/><rect x="47.8" y="30.5" width="2.6" height="23.1" fill="#e8261d"/><rect x="47.8" y="30.5" width="6.8" height="2.5" fill="#e8261d"/><rect x="46.3" y="39.4" width="7.8" height="2.2" fill="#e8261d"/><rect x="57.2" y="34.7" width="2.6" height="18.9" fill="#e8261d"/><rect x="55.6" y="39.4" width="6.4" height="2.2" fill="#e8261d"/><rect x="57.2" y="51" width="4.8" height="2.6" fill="#e8261d"/></svg>
<svg class="a" style="left:810px;top:425px" width="245" height="146" viewBox="0 0 245 146"><defs><mask id="cm" maskUnits="userSpaceOnUse" x="0" y="0" width="245" height="146"><circle cx="77" cy="76" r="67.5" fill="#fff"/><circle cx="78" cy="75.69999999999999" r="30" fill="#000"/><rect x="78" y="45.69999999999999" width="200" height="60" fill="#000"/><circle cx="110" cy="35" r="18" fill="#000"/><circle cx="110" cy="116" r="18" fill="#000"/><rect x="110" y="17" width="200" height="117" fill="#000"/></mask><clipPath id="cd"><rect x="0" y="0" width="36" height="146"/></clipPath><clipPath id="cw"><rect x="39" y="0" width="206" height="16"/></clipPath><clipPath id="cb"><rect x="36" y="16" width="209" height="130"/><rect x="36" y="0" width="3" height="16"/></clipPath></defs><g mask="url(#cm)"><rect x="0" y="0" width="37" height="146" fill="#741b1e"/><rect x="39" y="0" width="206" height="16" fill="#bd4f4c"/><rect x="37" y="16" width="208" height="130" fill="#873047"/><rect x="37" y="0" width="2" height="16" fill="#873047"/><rect x="37" y="54" width="59" height="44" fill="#7b3043"/></g><text x="66" y="90.5" font-family="Liberation Sans" font-weight="700" font-style="italic" font-size="44" fill="#8a2c45" stroke="#8a2c45" stroke-width="2.6" stroke-linejoin="miter" textLength="131" lengthAdjust="spacingAndGlyphs">RAX</text><rect x="58" y="84" width="8" height="2" fill="#8a2c45"/><rect x="62" y="88" width="10" height="2" fill="#8a2c45"/><rect x="96" y="88" width="8" height="2" fill="#8a2c45"/><rect x="101" y="84" width="6" height="2" fill="#8a2c45"/><rect x="134" y="88" width="10" height="2" fill="#8a2c45"/><rect x="138" y="84" width="6" height="2" fill="#8a2c45"/><rect x="178" y="88" width="10" height="2" fill="#8a2c45"/><rect x="182" y="84" width="6" height="2" fill="#8a2c45"/><rect x="98.4" y="113.8" width="38.5" height="3.6" fill="#8a2c45"/><rect x="203.4" y="113.8" width="41.6" height="3.6" fill="#8a2c45"/><text x="146" y="122.6" font-family="Liberation Sans" font-weight="700" font-size="18" fill="#8a2c45" textLength="49" lengthAdjust="spacingAndGlyphs">FORUM</text></svg>
</body></html>
